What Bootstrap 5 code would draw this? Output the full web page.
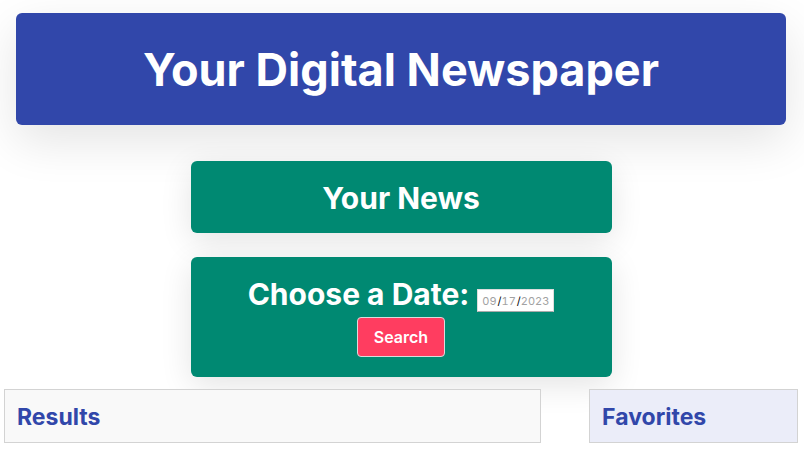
<!DOCTYPE html>
<html lang="en">
<head>
<meta charset="utf-8">
<meta name="viewport" content="width=device-width, initial-scale=1">
<title>Your Digital Newspaper</title>
<link href="https://cdn.jsdelivr.net/npm/bootstrap@5.3.0/dist/css/bootstrap.min.css" rel="stylesheet">
<style>
body { font-family: Inter, "Liberation Sans", sans-serif; background: #fff; overflow-x: hidden; }
.masthead { margin: 13px 18px 0 16px; padding: 29px 16px 27px; background: #3147aa; border-radius: 6px; box-shadow: 0 16px 48px rgba(0,0,0,.11); }
.masthead h1 { font-size: 45px; line-height: 56px; font-weight: 700; }
.search-wrap { padding: 36px 18px 0 16px; }
.search-area { width: 421px; max-width: 100%; gap: 24px; }
.panel { background: #008972; border-radius: 6px; box-shadow: 0 8px 32px rgba(0,0,0,.11); }
.panel h2, .panel label { font-size: 30px; line-height: 38px; font-weight: 700; }
.panel h2 { padding: 18px 16px 16px; }
.date-panel { padding: 18px 16px 20px; }
.date-box { width: 77px; height: 23px; margin-bottom: 1px; padding: 0 4px; border: 1px solid #ddd; border-bottom-color: #aaa; background: #fff; color: #000; font-size: 11px; line-height: 20px; font-variant-numeric: tabular-nums; }
.date-box::-webkit-calendar-picker-indicator { display: none; }
.date-box::-webkit-datetime-edit-text { font-size: 13px; padding-left: 1px; }
.date-box::-webkit-datetime-edit-month-field,
.date-box::-webkit-datetime-edit-day-field,
.date-box::-webkit-datetime-edit-year-field { color: #a2a2a2; }
.search-btn { height: 40px; margin-top: 4px; padding: 0 16px; background: #ff3d60; border: 1px solid #dbdbdb; border-radius: 4px; color: #fff; font-size: 16px; font-weight: 600; }
.columns-area { display: grid; grid-template-columns: 18fr 7fr; gap: 48px; margin: 12px 6px 0 4px; }
.news-box { border: 1px solid #d3d3d3; padding: 12px 12px 10px; background: #f9f9f9; position: relative; }
.news-box h2 { font-size: 23px; line-height: 30px; font-weight: 700; color: #3147aa; }
.favorites-box { background: #ebedf9; }
</style>
<script src="https://cdn.jsdelivr.net/npm/bootstrap@5.3.0/dist/js/bootstrap.bundle.min.js" defer></script>
</head>
<body>
<header class="masthead text-center text-white">
  <h1 class="mb-0">Your Digital Newspaper</h1>
</header>
<main>
  <div class="search-wrap">
    <section class="search-area d-flex flex-column mx-auto text-center text-white">
      <div class="panel"><h2 class="mb-0">Your News</h2></div>
      <form class="panel date-panel">
        <div class="d-flex justify-content-center align-items-end">
          <label for="date" class="me-2">Choose a Date:</label>
          <input id="date" class="date-box" type="date" value="2023-09-17">
        </div>
        <button type="button" class="btn search-btn">Search</button>
      </form>
    </section>
  </div>
  <div class="columns-area">
    <section class="news-box"><h2 class="mb-0">Results</h2></section>
    <aside class="news-box favorites-box"><h2 class="mb-0">Favorites</h2></aside>
  </div>
</main>
</body>
</html>
